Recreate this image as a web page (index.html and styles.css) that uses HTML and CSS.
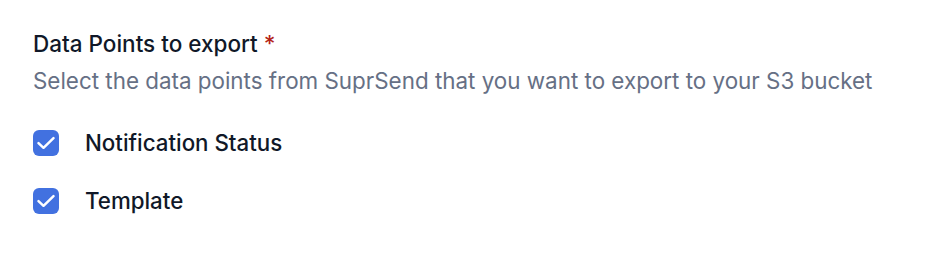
FILE: index.html
```html
<!DOCTYPE html>
<html>
<head>
<meta charset="utf-8">
<link rel="stylesheet" href="styles.css">
</head>
<body>
<div class="field">
  <div class="label">Data Points to export <span class="req">*</span></div>
  <div class="desc">Select the data points from SuprSend that you want to export to your S3 bucket</div>
  <div class="options">
    <label class="option">
      <span class="box"><svg viewBox="0 0 26 26" width="26" height="26"><path d="M5.5 13.2l5 4.6L20.5 8.2" fill="none" stroke="#fff" stroke-width="2.5" stroke-linecap="round" stroke-linejoin="round"/></svg></span>
      <span class="text">Notification Status</span>
    </label>
    <label class="option">
      <span class="box"><svg viewBox="0 0 26 26" width="26" height="26"><path d="M5.5 13.2l5 4.6L20.5 8.2" fill="none" stroke="#fff" stroke-width="2.5" stroke-linecap="round" stroke-linejoin="round"/></svg></span>
      <span class="text">Template</span>
    </label>
  </div>
</div>
</body>
</html>
```
FILE: styles.css
```css
html, body {
  margin: 0;
  padding: 0;
  background: #ffffff;
}
body {
  font-family: Inter, "Noto Sans", sans-serif;
  width: 932px;
  height: 258px;
}
.field {
  padding: 27px 0 0 33px;
}
.label {
  font-size: 22.5px;
  font-weight: 500;
  color: #101828;
  line-height: 34px;
}
.req {
  color: #b42318;
}
.desc {
  margin-top: 3px;
  font-size: 22.4px;
  color: #667085;
  line-height: 34px;
}
.options {
  display: flex;
  flex-direction: column;
  gap: 24px;
  margin-top: 28px;
}
.option {
  display: flex;
  align-items: center;
  gap: 26px;
  height: 34px;
}
.box {
  width: 26px;
  height: 26px;
  border-radius: 6px;
  background: #4271e0;
  display: flex;
  flex: none;
}
.text {
  font-size: 22.3px;
  font-weight: 500;
  color: #101828;
  line-height: 34px;
}
```
